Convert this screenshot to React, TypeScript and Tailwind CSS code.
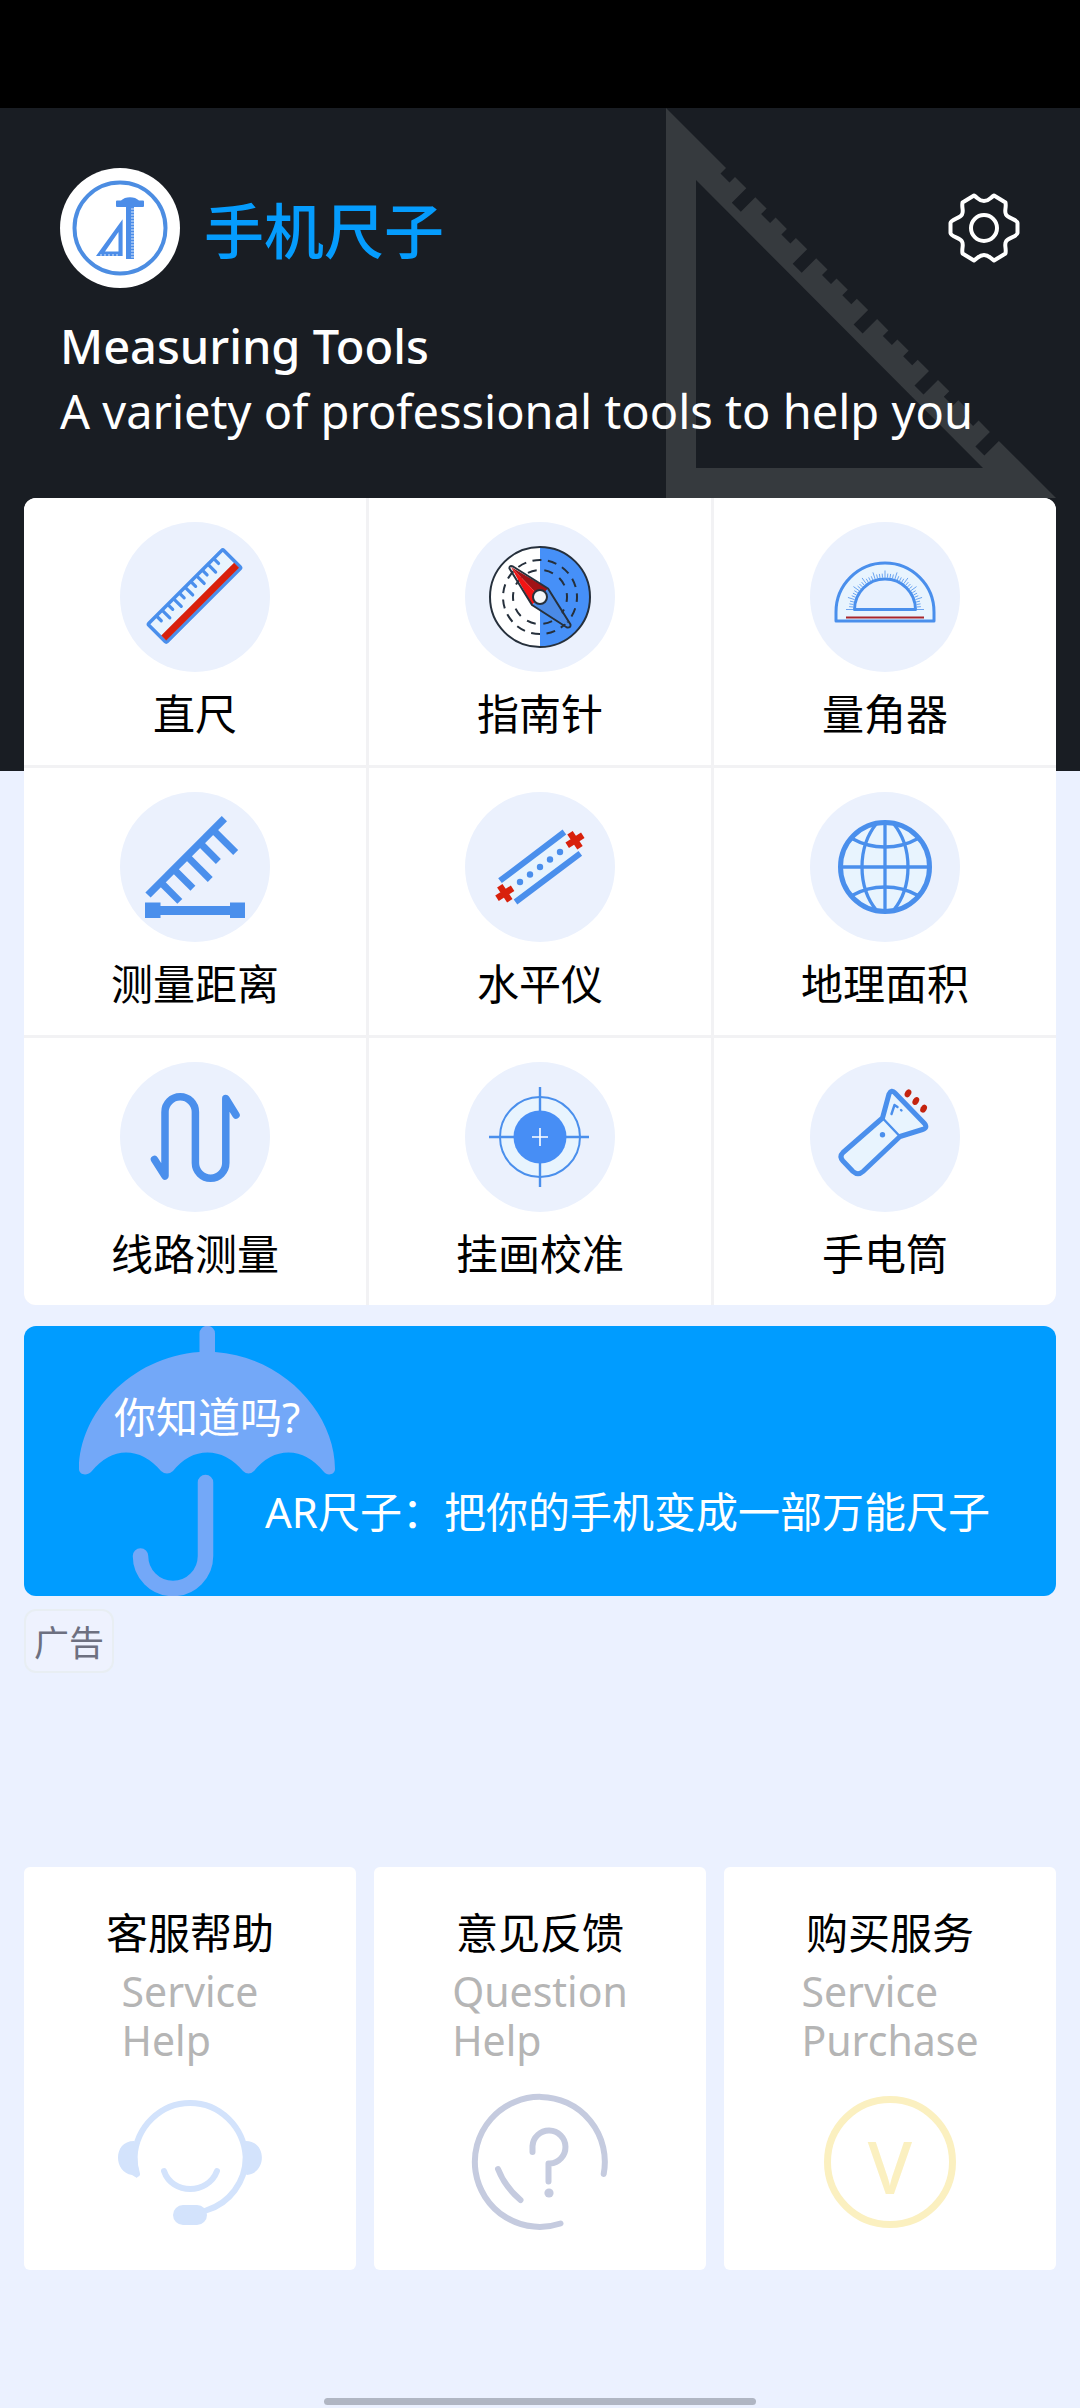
import React from "react";

const BLUE = "#4a8fec";
const RED = "#d8210c";
const PALE = "#e8f4fe";

/* ---------- header drawings ---------- */

function setSquareOutline(): string {
  const points: string[] = ["0,0"];
  for (let k = 0; k < 14; k++) {
    const start = Math.round((60 + k * 20.3) * 10) / 10;
    const end = start + 9;
    const depth = k % 3 === 1 ? 14.5 : 5.5;
    points.push(`${start},${start}`);
    points.push(`${start - depth},${start + depth}`);
    points.push(`${end - depth},${end + depth}`);
    points.push(`${end},${end}`);
  }
  points.push("390,390", "0,390");
  return `M${points.join("L")}Z M30,72V360H317Z`;
}

function SetSquare() {
  return (
    <svg className="pointer-events-none absolute top-0 right-6 h-[390px] w-[390px]" viewBox="0 0 390 390" aria-hidden="true">
      <path d={setSquareOutline()} fill="#363a3e" fillRule="evenodd" />
    </svg>
  );
}

function Logo() {
  const ticks = Array.from({ length: 17 }, (_, i) => 41 + i * 3);
  return (
    <svg className="size-[120px] shrink-0" viewBox="0 0 120 120" aria-hidden="true">
      <circle cx="60" cy="60" r="60" fill="#fff" />
      <circle cx="60" cy="60" r="45.5" fill="none" stroke="#4c8de2" strokeWidth="4" />
      <g fill="#4c8de8">
        <path d="M57 32.5H61C65 28 75 28 79 32.5H83Q84 32.5 84 33.5V38Q84 39 83 39H57Q56 39 56 38V33.5Q56 32.5 57 32.5Z" />
        <rect x="66" y="39" width="8" height="52" />
        <path d="M62.6 51.3V88H36ZM58.5 64V83.5H45Z" fillRule="evenodd" />
      </g>
      {ticks.map((y) => (
        <path key={y} d={`M71 ${y}H74`} stroke="#dce9fb" strokeWidth="1" />
      ))}
      {[41, 45, 49, 53, 57].map((x) => (
        <path key={x} d={`M${x} 86V88`} stroke="#dce9fb" strokeWidth="1" />
      ))}
    </svg>
  );
}

function GearIcon() {
  return (
    <svg className="h-[72px] w-[72px]" viewBox="-36 -36 72 72" fill="none" stroke="#fff" strokeWidth="4" strokeLinejoin="round" aria-hidden="true">
      <path d="M-10 -32.5L-21.5 -25.5C-22.5 -20 -20 -17 -22 -13.5C-24 -9.500 -33 -9 -33.500 -5V5C-33 9 -24 9.500 -22 13.500C-20 17 -22.500 20 -21.500 25.500L-10 32.500C-6 30 -5 27 0 27C5 27 6 30 10 32.500L21.500 25.500C22.500 20 20 17 22 13.500C24 9.500 33 9 33.500 5V-5C33 -9 24 -9.500 22 -13.500C20 -17 22.500 -20 21.500 -25.500L10 -32.500C6 -30 5 -27 0 -27C-5 -27 -6 -30 -10 -32.500Z" />
      <circle r="13" />
    </svg>
  );
}

/* ---------- tool icons, each on a 150 unit disc ---------- */

function RulerIcon() {
  return (
    <g transform="translate(74.500 74) rotate(-45)">
      <rect x="-53" y="-13" width="106" height="26" rx="1.500" fill={PALE} stroke={BLUE} strokeWidth="3.500" />
      <rect x="-51.500" y="4.500" width="103" height="7" fill={RED} />
      {Array.from({ length: 11 }, (_, i) => (
        <path key={i} d={`M${-41 + i * 8.1} -12V${i % 2 ? -2 : -6}`} stroke={BLUE} strokeWidth="3.200" strokeLinecap="round" />
      ))}
    </g>
  );
}

function CompassIcon() {
  const ink = "#26303c";
  return (
    <g transform="translate(75 75)">
      <circle r="50" fill="#fff" />
      <path d="M0 -50A50 50 0 0 1 0 50Z" fill="#4690f8" />
      <circle r="50" fill="none" stroke={ink} strokeWidth="2" />
      <circle r="37" fill="none" stroke={ink} strokeWidth="2" strokeDasharray="9 6.500" strokeDashoffset="4" />
      <circle r="27" fill="none" stroke={ink} strokeWidth="2" strokeDasharray="9 7.900" strokeDashoffset="4" />
      <path d="M-29 -30L8 -8.500L0 0Z" fill="#a01216" />
      <path d="M-29 -30L-8 8L0 0Z" fill="#f21414" />
      <path d="M-8 8L30 30L8 -8Z" fill="#4a8ae6" />
      <path d="M-30.500 -28.500L-8 8L27 30.500Q31 31 30.500 27.500L8 -8.500L-27 -30.500Q-31 -32 -30.500 -28.500Z" fill="none" stroke={ink} strokeWidth="2" strokeLinejoin="round" />
      <circle r="7" fill="#f4f6f8" stroke={ink} strokeWidth="2" />
    </g>
  );
}

function ProtractorIcon() {
  const ticks = Array.from({ length: 41 }, (_, i) => i);
  return (
    <g fill="none" stroke={BLUE}>
      <path d="M26 99V90A49 49 0 0 1 124 90V99Z" fill={PALE} strokeWidth="3" strokeLinejoin="round" />
      {ticks.map((i) => {
        const a = (Math.PI * i) / 40;
        const r = i % 4 === 0 ? 39 : 36;
        return (
          <path
            key={i}
            d={`M${75 - 32 * Math.cos(a)} ${87.5 - 32 * Math.sin(a)}L${75 - r * Math.cos(a)} ${87.5 - r * Math.sin(a)}`}
            strokeWidth="0.800"
          />
        );
      })}
      <path d="M44.500 87.500A30.500 30.500 0 0 1 105.500 87.500Z" fill="#e8f1fe" strokeWidth="3" strokeLinejoin="round" />
      <path d="M36 95.500H114" stroke="#a8262c" strokeWidth="2.200" />
    </g>
  );
}

function DistanceIcon() {
  const teeth = [
    [18, 27],
    [36.5, 27],
    [55, 33],
    [73.5, 26],
    [92, 32],
  ];
  return (
    <g>
      <g transform="translate(28 103) rotate(-45)" fill={BLUE}>
        <rect x="0" y="-3.700" width="108" height="7.400" />
        {teeth.map(([x, length]) => (
          <rect key={x} x={x - 3.5} y="0" width="7" height={length} />
        ))}
      </g>
      <g fill={BLUE}>
        <rect x="25" y="110.500" width="15.500" height="15.500" />
        <rect x="110" y="110.500" width="15" height="15.500" />
        <rect x="38" y="114" width="74" height="9" />
      </g>
    </g>
  );
}

function LevelIcon() {
  return (
    <g>
      <path d="M35 89L99 41L115 62L50.500 110Z" fill={PALE} />
      <path d="M35 88.700L99.400 40M50.500 110L115.300 61.300" stroke={BLUE} strokeWidth="6" />
      {[0, 1, 2, 3, 4].map((i) => (
        <circle key={i} cx={55 + i * 10} cy={90 - i * 7.5} r="3.200" fill={BLUE} />
      ))}
      <path d="M34.800 93.800L44.800 108.800M32 106.300L47.600 96.300" stroke={RED} strokeWidth="6.500" />
      <path d="M105 40.800L115 55.800M102.200 53.300L117.800 43.300" stroke={RED} strokeWidth="6.500" />
    </g>
  );
}

function GlobeIcon() {
  return (
    <g fill="none" stroke={BLUE} strokeWidth="3.300">
      <circle cx="75" cy="75" r="44.500" fill={PALE} strokeWidth="5" />
      <path d="M75 31V119M31 75H119" />
      <path d="M67 31Q52 49 52 75T67 119M83 31Q98 49 98 75T83 119" />
      <path d="M42 46.500Q57 55 75 55T108 46.500M42 103.500Q57 95 75 95T108 103.500" />
    </g>
  );
}

function RouteIcon() {
  return (
    <path
      d="M34.500 97.500L45 114V50A15.200 15.200 0 0 1 75.400 50V101A15.200 15.200 0 0 0 105.800 101V36.500L116 53"
      fill="none"
      stroke={BLUE}
      strokeWidth="7.500"
      strokeLinecap="round"
      strokeLinejoin="round"
    />
  );
}

function TargetIcon() {
  return (
    <g fill="none" stroke={BLUE}>
      <circle cx="75" cy="75" r="40" fill={PALE} strokeWidth="2" />
      <path d="M24 75H124M75 25V125" strokeWidth="2.400" />
      <circle cx="75" cy="75" r="26.500" fill="#478ef5" stroke="none" />
      <path d="M67 75H83M75 66V84" stroke="#fff" strokeWidth="1.600" />
    </g>
  );
}

function FlashlightIcon() {
  return (
    <g fill="none" stroke={BLUE} strokeLinecap="round" strokeLinejoin="round">
      <path
        d="M72.500 56L79 32Q81.500 27 85 31L114.500 61.500Q118 66 112.500 67.500L90 74.500L53 109.500Q48 114 43 109.500L33 99Q29 94.500 33 90.500Z"
        fill={PALE}
        strokeWidth="5"
      />
      <path d="M72.500 56L90 74.500" strokeWidth="2.400" />
      <path d="M81.500 52L84.500 43L87.500 45M91 48L91.500 48.500" strokeWidth="2.400" />
      <circle cx="72.500" cy="72.700" r="2.700" fill={BLUE} stroke="none" />
      {[0, 1, 2].map((i) => (
        <ellipse
          key={i}
          cx={98 + i * 7.8}
          cy={31.3 + i * 7.7}
          rx="3"
          ry="4.200"
          transform={`rotate(30 ${98 + i * 7.8} ${31.3 + i * 7.7})`}
          fill="#c4220e"
          stroke="none"
        />
      ))}
    </g>
  );
}

const tools: { label: string; Icon: () => React.ReactElement }[] = [
  { label: "直尺", Icon: RulerIcon },
  { label: "指南针", Icon: CompassIcon },
  { label: "量角器", Icon: ProtractorIcon },
  { label: "测量距离", Icon: DistanceIcon },
  { label: "水平仪", Icon: LevelIcon },
  { label: "地理面积", Icon: GlobeIcon },
  { label: "线路测量", Icon: RouteIcon },
  { label: "挂画校准", Icon: TargetIcon },
  { label: "手电筒", Icon: FlashlightIcon },
];

function ToolTile({ label, Icon }: { label: string; Icon: () => React.ReactElement }) {
  return (
    <button type="button" className="flex flex-col items-center gap-2.5 bg-white pt-6 pb-[23px]">
      <svg className="size-[150px]" viewBox="0 0 150 150" aria-hidden="true">
        <circle cx="75" cy="75" r="75" fill="#ebf1fd" />
        <Icon />
      </svg>
      <span className="text-[42px] leading-[60px] text-black">{label}</span>
    </button>
  );
}

/* ---------- banner ---------- */

function Umbrella() {
  return (
    <svg className="absolute top-0 left-[50px] h-[270px] w-[270px]" viewBox="50 0 270 270" aria-hidden="true">
      <path
        d="M175.500 26V7.500A7.700 7.700 0 0 1 191 7.500V26C260 31 311 88 311 143C311 149 303 150 300 146Q284 126.500 264.500 126.500T230 145Q224.500 150 219 145Q203 126.500 183.500 126.500T149 145Q143 150 137 145Q121 126.500 102 126.500T67 146C63 150 55 149 55 143C55 88 106 31 175.500 26Z"
        fill="#73a8f8"
      />
      <path d="M181.500 156.500V230A32.500 32.500 0 0 1 116.500 230" fill="none" stroke="#73a8f8" strokeWidth="15.500" strokeLinecap="round" />
    </svg>
  );
}

/* ---------- service cards ---------- */

function HeadsetIcon() {
  return (
    <svg className="h-[140px] w-[160px]" viewBox="0 -2 160 140" fill="none" stroke="#d3e3fc" strokeWidth="6" strokeLinecap="round" aria-hidden="true">
      <path d="M27 80Q24.500 72 24.500 63A55.700 57.500 0 0 1 135.700 63A55.700 55.700 0 0 1 96 116.500" />
      <path d="M24 47C3 47 3 78 22 81L27 84L29 79Q26 65 28 50ZM136 47C157 47 157 79 137 81L132 78Q136 65 132 50Z" fill="#d3e3fc" stroke="none" />
      <path d="M54 77C62 101 98 101 107 77" />
      <rect x="63" y="111" width="34" height="20" rx="10" fill="#d3e3fc" stroke="none" />
    </svg>
  );
}

function QuestionIcon() {
  return (
    <svg className="h-[140px] w-[160px]" viewBox="0 0 160 140" fill="none" stroke="#c5cbdf" strokeWidth="6" strokeLinecap="round" strokeLinejoin="round" aria-hidden="true">
      <path d="M100.500 131.500A65 65 0 1 1 143.700 82" />
      <path d="M38 77Q45 95 60.500 108" />
      <path d="M72.500 60V54A16.500 16.500 0 1 1 90 71.500H88.500V89.500" />
      <circle cx="89" cy="101" r="4.600" fill="#c5cbdf" stroke="none" />
    </svg>
  );
}

function CoinIcon() {
  return (
    <svg className="h-[140px] w-[160px]" viewBox="0 0 160 140" aria-hidden="true">
      <circle cx="80" cy="70" r="62.500" fill="none" stroke="#fbf0c0" strokeWidth="7" />
      <text x="80" y="102" textAnchor="middle" fontSize="72" fontWeight="500" fill="#fbf0c0">
        V
      </text>
    </svg>
  );
}

const services = [
  { title: "客服帮助", lines: ["Service", "Help"], Icon: HeadsetIcon },
  { title: "意见反馈", lines: ["Question", "Help"], Icon: QuestionIcon },
  { title: "购买服务", lines: ["Service", "Purchase"], Icon: CoinIcon },
];

export default function App() {
  return (
    <div className="flex min-h-screen flex-col bg-[#ebf1ff] font-['Noto_Sans','Noto_Sans_CJK_SC',sans-serif]">
      <div className="h-[108px] shrink-0 bg-black" />

      <header className="relative bg-[#191d23] px-[60px] pt-[60px] pb-[327px]">
        <SetSquare />
        <div className="relative flex items-center">
          <Logo />
          <h1 className="ml-6 flex-1 font-['Noto_Sans_CJK_SC',sans-serif] text-[60px] leading-[84px] font-medium text-[#059cfd]">手机尺子</h1>
          <button type="button" aria-label="设置">
            <GearIcon />
          </button>
        </div>
        <div className="relative mt-[26px] text-[47px] leading-[65px] whitespace-nowrap text-white">
          <p className="font-medium">Measuring Tools</p>
          <p>A variety of professional tools to help you</p>
        </div>
      </header>

      <main className="relative -mt-[273px] flex flex-col px-6">
        <div className="grid grid-cols-3 gap-[3px] overflow-hidden rounded-xl bg-[#f2f2f4] font-['Noto_Sans_CJK_SC',sans-serif]">
          {tools.map((tool) => (
            <ToolTile key={tool.label} {...tool} />
          ))}
        </div>

        <section className="relative mt-[21px] overflow-hidden rounded-xl bg-[#009cff] pt-[61px] pb-[54px] text-[42px] leading-[60px] text-white">
          <Umbrella />
          <h2 className="relative pl-[90px]">你知道吗?</h2>
          <p className="relative mt-[35px] pl-[241px] whitespace-nowrap">AR尺子：把你的手机变成一部万能尺子</p>
        </section>

        <span className="mt-[13px] self-start rounded-xl border-2 border-[#e8eef3] bg-[#eef2fe] px-2 pt-1 text-[35px] leading-[56px] text-[#6d7080]">广告</span>

        <div className="mt-[194px] grid grid-cols-3 gap-[18px]">
          {services.map(({ title, lines, Icon }) => (
            <button type="button" key={title} className="flex flex-col items-center rounded-md bg-white pt-9 pb-[38px]">
              <span className="text-[42px] leading-[60px] text-black">{title}</span>
              <span className="mt-1 flex flex-col text-left text-[41px] leading-[49px] text-[#b5b5b5]">
                {lines.map((line) => (
                  <span key={line}>{line}</span>
                ))}
              </span>
              <span className="mt-[27px]">
                <Icon />
              </span>
            </button>
          ))}
        </div>
      </main>

      <div className="mt-auto flex justify-center pb-[3px]">
        <div className="h-[7px] w-2/5 rounded-full bg-[#b0b6c3]" />
      </div>
    </div>
  );
}
